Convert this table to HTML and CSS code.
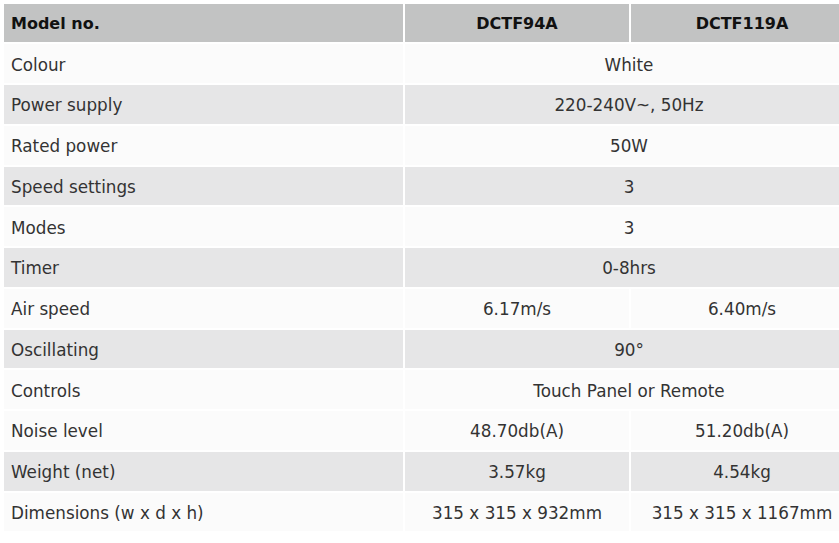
FILE: index.html
```html
<!DOCTYPE html>
<html>
<head>
<meta charset="utf-8">
<link rel="stylesheet" href="styles.css">
</head>
<body>
<table class="spec">
  <colgroup><col class="c1"><col class="c2"><col class="c3"></colgroup>
  <tr class="head"><th class="label">Model no.</th><th>DCTF94A</th><th>DCTF119A</th></tr>
  <tr class="light"><td class="label">Colour</td><td colspan="2">White</td></tr>
  <tr class="grey"><td class="label">Power supply</td><td colspan="2">220-240V~, 50Hz</td></tr>
  <tr class="light"><td class="label">Rated power</td><td colspan="2">50W</td></tr>
  <tr class="grey"><td class="label">Speed settings</td><td colspan="2">3</td></tr>
  <tr class="light"><td class="label">Modes</td><td colspan="2">3</td></tr>
  <tr class="grey"><td class="label">Timer</td><td colspan="2">0-8hrs</td></tr>
  <tr class="light"><td class="label">Air speed</td><td>6.17m/s</td><td>6.40m/s</td></tr>
  <tr class="grey"><td class="label">Oscillating</td><td colspan="2">90°</td></tr>
  <tr class="light"><td class="label">Controls</td><td colspan="2">Touch Panel or Remote</td></tr>
  <tr class="light"><td class="label">Noise level</td><td>48.70db(A)</td><td>51.20db(A)</td></tr>
  <tr class="grey"><td class="label">Weight (net)</td><td>3.57kg</td><td>4.54kg</td></tr>
  <tr class="light"><td class="label">Dimensions (w x d x h)</td><td>315 x 315 x 932mm</td><td>315 x 315 x 1167mm</td></tr>
</table>
</body>
</html>
```
FILE: styles.css
```css
html, body {
  margin: 0;
  padding: 0;
  background: #ffffff;
  overflow: hidden;
}
.spec {
  margin: 1.5px 0 0 2px;
  border-collapse: separate;
  border-spacing: 2px;
  table-layout: fixed;
  width: 853px;
  font-family: "DejaVu Sans", sans-serif;
  font-size: 16.8px;
  color: #333333;
}
.c1 { width: 399px; }
.c2 { width: 224px; }
.c3 { width: 222px; }
.spec tr { height: 38.75px; }
.spec td, .spec th {
  padding: 2px 0 0 0;
  text-align: center;
  vertical-align: middle;
  white-space: nowrap;
  line-height: 20px;
}
.spec .label {
  text-align: left;
  padding-left: 7px;
}
.head th {
  background: #c2c3c3;
  font-weight: bold;
  font-size: 16px;
  color: #111111;
}
.light td { background: #fbfbfb; }
.grey td { background: #e6e6e7; }
```
